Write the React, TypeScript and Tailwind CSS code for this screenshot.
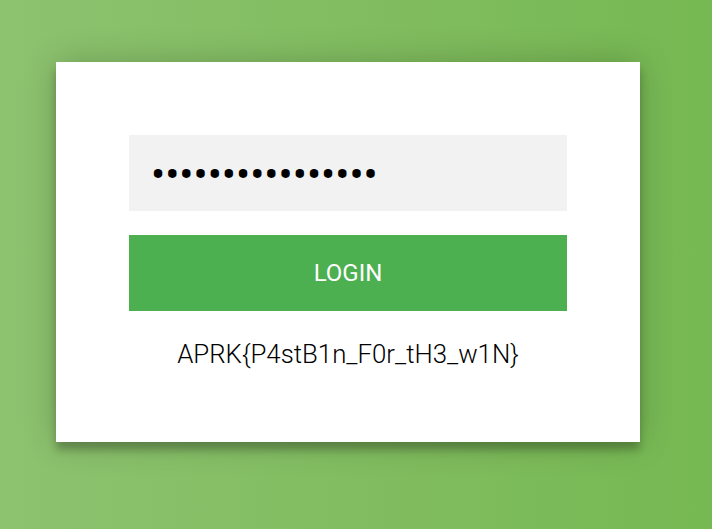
export default function App() {
  return (
    <div
      className="min-h-[529px] w-full bg-[linear-gradient(to_left,#76b852,#8DC26F)] pl-[56px] pt-[62px]"
      style={{ fontFamily: "Roboto, 'Liberation Sans', sans-serif" }}
    >
      <div className="flex h-[380px] w-[584px] flex-col bg-white px-[73px] pt-[73px] shadow-[0_0_32px_0_rgba(0,0,0,0.2),0_8px_8px_0_rgba(0,0,0,0.24)]">
        <input
          type="password"
          readOnly
          value="aaaaaaaaaaaaaaaa"
          className="h-[76px] w-full bg-[#f2f2f2] pl-[22px] pt-[2px] text-[42px] text-black outline-none"
          style={{ fontFamily: "Roboto, 'Liberation Sans', sans-serif" }}
        />
        <button className="mt-[24px] h-[76px] w-full bg-[#4CAF50] text-[24px] uppercase text-white">
          Login
        </button>
        <p className="mt-[26px] text-center text-[25.8px] leading-[34px] font-light text-black">
          APRK{"{"}P4stB1n_F0r_tH3_w1N{"}"}
        </p>
      </div>
    </div>
  );
}
